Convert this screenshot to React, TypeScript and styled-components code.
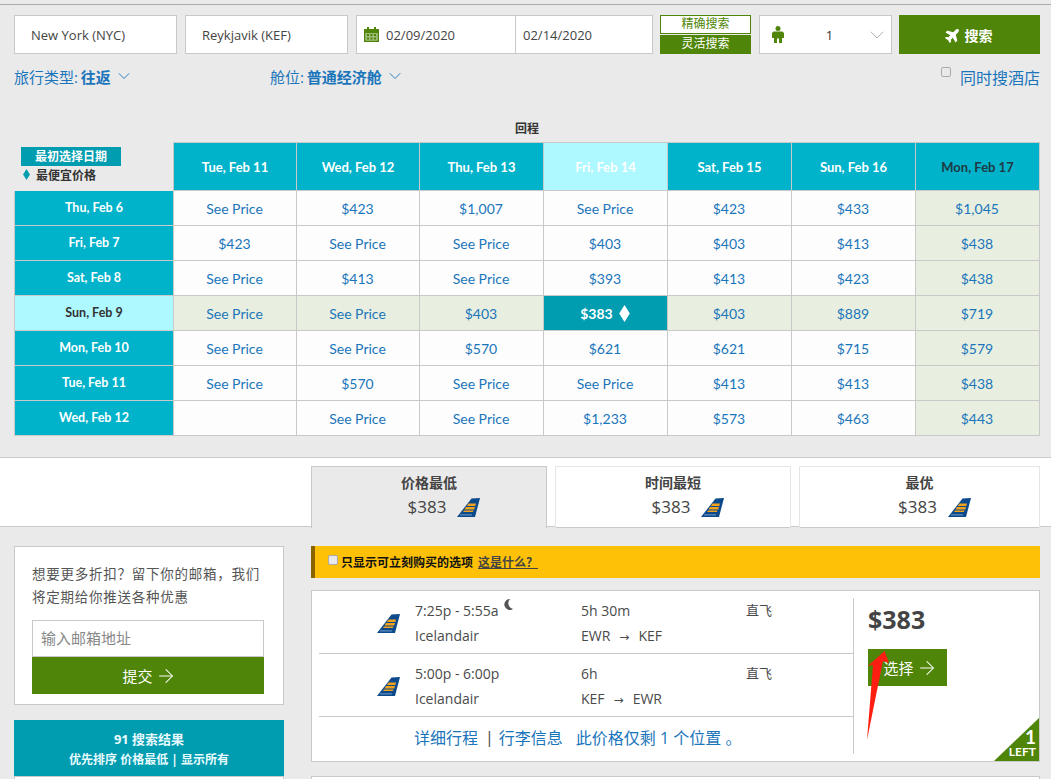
import React, { FunctionComponent } from "react"
import styled, { createGlobalStyle } from "styled-components"
import { ArrowRight, ChevronDown } from "lucide-react"
import { FaPlane } from "react-icons/fa"

const SANS = `"Open Sans", "Noto Sans CJK SC", sans-serif`
const LATO = `Lato, "Noto Sans CJK SC", sans-serif`
const GREEN = "#4f8508"
const BLUE = "#1a75bb"
const LINE = "#c9c9c9"

const GlobalStyle = createGlobalStyle`
  html, body {
    margin: 0;
    height: 100%;
    overflow: hidden;
    background: #eaeaea;
  }
  * {
    box-sizing: border-box;
  }
`

const Page = styled.div`
  height: 779px;
  overflow: hidden;
  padding-top: 4px;
  font-family: ${SANS};
  color: #444;
`

const SearchArea = styled.div`
  border-top: 1px solid #aaa;
  padding: 10px 11px 0 14px;
`

const SearchRow = styled.div`
  display: flex;
  gap: 8px;
  height: 39px;
`

const Field = styled.div<{ width: number }>`
  display: flex;
  align-items: center;
  width: ${({ width }) => width}px;
  background: #fff;
  border: 1px solid ${LINE};
  font-size: 13px;
  color: #444;
`

const PlaceField = styled(Field)`
  padding: 1px 0 0 16px;
`

const DatePart = styled.div<{ first?: boolean }>`
  display: flex;
  align-items: center;
  gap: 7px;
  height: 100%;
  padding-left: 7px;
  width: ${({ first }) => (first ? "159px" : "auto")};
  flex: ${({ first }) => (first ? "0 0 auto" : "1")};
  border-right: ${({ first }) => (first ? `1px solid ${LINE}` : "none")};
`

const ModeStack = styled.div`
  display: flex;
  flex-direction: column;
  gap: 1px;
  width: 91px;
  margin-left: -1px;
`

const ModeButton = styled.div<{ active?: boolean }>`
  flex: 1 1 0;
  min-height: 0;
  display: flex;
  align-items: center;
  justify-content: center;
  padding-bottom: 1px;
  font-size: 12px;
  line-height: 1;
  background: ${({ active }) => (active ? GREEN : "#fff")};
  color: ${({ active }) => (active ? "#fff" : GREEN)};
  border: 1px solid ${GREEN};
`

const PaxField = styled(Field)`
  justify-content: space-between;
  padding: 0 2px 0 12px;
  color: #333;
`

const PaxCount = styled.span`
  margin-left: 10px;
`

const SearchButton = styled.div`
  display: flex;
  align-items: center;
  justify-content: center;
  gap: 4px;
  width: 141px;
  margin-left: -1px;
  padding-right: 2px;
  background: ${GREEN};
  color: #fff;
  font-size: 14px;
  font-weight: 600;
`

const OptionsRow = styled.div`
  display: flex;
  align-items: flex-start;
  height: 30px;
  margin-top: 12px;
  font-size: 15px;
  color: ${BLUE};
`

const OptionLink = styled.div<{ width?: number }>`
  display: flex;
  align-items: center;
  gap: 3px;
  width: ${({ width }) => (width ? `${width}px` : "auto")};
  height: 20px;

  b {
    font-weight: 700;
    margin-left: -1px;
  }
`

const HotelOption = styled.div`
  margin-left: auto;
  display: flex;
  align-items: flex-start;
  gap: 9px;
  font-size: 16px;
  line-height: 24px;
  margin-right: 0;
`

const Check = styled.span`
  display: block;
  flex: none;
  width: 10px;
  height: 10px;
  margin-top: 1px;
  background: #e9e9e9;
  border: 1px solid #aaa;
  border-radius: 2px;
`

const ReturnTitle = styled.div`
  text-align: center;
  font-size: 12px;
  font-weight: 700;
  color: #333;
  height: 17px;
  line-height: 17px;
  margin: 24px 0 5px;
`

const Matrix = styled.div`
  display: grid;
  grid-template-columns: 159px 123px 123px 124px 124px 124px 124px 125px;
  grid-template-rows: 49px repeat(7, 35px);
  width: 1026px;
  font-family: ${LATO};
`

const LegendCell = styled.div`
  padding: 5px 0 0 7px;
`

const LegendChip = styled.div`
  width: 100px;
  height: 19px;
  line-height: 19px;
  background: #009cb0;
  color: #fff;
  text-align: center;
  font-size: 12px;
  font-weight: 700;
`

const LegendNote = styled.div`
  display: flex;
  align-items: center;
  gap: 6px;
  height: 16px;
  padding-left: 2px;
  font-size: 12px;
  font-weight: 700;
  color: #333;
`

const Head = styled.div<{ tone?: "light" | "dark" }>`
  display: flex;
  align-items: center;
  justify-content: center;
  background: ${({ tone }) => (tone === "light" ? "#aef8ff" : "#00b3cb")};
  color: ${({ tone }) => (tone === "dark" ? "#1f3a44" : "#fff")};
  border: 1px solid ${LINE};
  border-right-width: 0;
  font-size: 13px;
  font-weight: 700;

  &:nth-child(8) {
    border-right-width: 1px;
  }
`

const RowLabel = styled.div<{ light?: boolean }>`
  display: flex;
  align-items: center;
  justify-content: center;
  padding-bottom: 2px;
  background: ${({ light }) => (light ? "#aef8ff" : "#00b3cb")};
  color: ${({ light }) => (light ? "#333" : "#fff")};
  border-bottom: 1px solid ${LINE};
  border-left: 1px solid ${LINE};
  font-size: 12.5px;
  font-weight: 700;
`

const Price = styled.div<{ shade?: boolean; best?: boolean }>`
  display: flex;
  align-items: center;
  justify-content: center;
  gap: 6px;
  padding-right: 1px;
  background: ${({ shade, best }) => (best ? "#009cb0" : shade ? "#e8efe0" : "#fdfdfd")};
  color: ${({ best }) => (best ? "#fff" : BLUE)};
  border-bottom: 1px solid ${LINE};
  border-left: 1px solid ${LINE};
  font-size: 14px;
  font-weight: ${({ best }) => (best ? 700 : 400)};

  &:nth-child(8n + 8) {
    border-right: 1px solid ${LINE};
  }
`

const SortBand = styled.div`
  display: flex;
  justify-content: flex-end;
  gap: 8px;
  height: 70px;
  margin-top: 21px;
  padding: 8px 11px 0 0;
  background: #fff;
  border-top: 1px solid ${LINE};
  border-bottom: 1px solid ${LINE};
`

const SortTab = styled.div<{ active?: boolean; width: number }>`
  display: flex;
  flex-direction: column;
  align-items: center;
  width: ${({ width }) => width}px;
  height: 62px;
  padding-top: 7px;
  background: ${({ active }) => (active ? "#eaeaea" : "#fff")};
  border: 1px solid ${({ active }) => (active ? LINE : "#e6e6e6")};
  border-bottom: none;
  margin-bottom: -1px;
  ${({ active }) => (active ? "" : `box-shadow: inset 0 -1px 0 ${LINE};`)}
`

const SortTitle = styled.div`
  font-size: 14px;
  font-weight: 600;
  line-height: 18px;
  color: #444;
`

const SortPrice = styled.div`
  display: flex;
  align-items: center;
  gap: 11px;
  margin-top: 3px;
  padding-left: 30px;
  font-size: 17px;
  line-height: 24px;
  color: #444;
`

const Main = styled.div`
  display: flex;
  gap: 27px;
  padding: 19px 11px 0 14px;
`

const Sidebar = styled.div`
  flex: 0 0 270px;
`

const DealBox = styled.div`
  height: 159px;
  padding: 16px 19px 0 17px;
  background: #fff;
  border: 1px solid ${LINE};
`

const DealText = styled.div`
  font-size: 13.5px;
  line-height: 23px;
  letter-spacing: 0.75px;
  color: #555;
  white-space: nowrap;
`

const EmailInput = styled.div`
  height: 37px;
  line-height: 35px;
  margin-top: 11px;
  padding-left: 8px;
  border: 1px solid ${LINE};
  font-size: 15px;
  color: #888;
`

const SubmitButton = styled.div`
  display: flex;
  align-items: center;
  justify-content: center;
  gap: 2px;
  height: 37px;
  padding-left: 3px;
  background: ${GREEN};
  color: #fff;
  font-size: 15px;
`

const ResultsBox = styled.div`
  height: 56px;
  margin-top: 15px;
  padding-top: 9px;
  background: #009cb0;
  color: #e9fbff;
  text-align: center;
  font-weight: 700;
`

const ResultsCount = styled.div`
  font-size: 13px;
  line-height: 20px;
`

const ResultsSort = styled.div`
  margin-top: 1px;
  font-size: 12px;
  line-height: 20px;
`

const SidebarRest = styled.div`
  height: 30px;
  background: #fff;
  border: 1px solid ${LINE};
`

const Results = styled.div`
  flex: 0 0 729px;
`

const Notice = styled.div`
  display: flex;
  align-items: center;
  height: 32px;
  padding-left: 13px;
  background: #ffc107;
  border-left: 4px solid #8a6400;
  font-size: 12px;
  font-weight: 700;
  color: #111;

  a {
    margin-left: 5px;
    color: #444;
    text-decoration: underline;
  }
`

const NoticeCheck = styled(Check)`
  margin: -4px 3px 0 0;
`

const Card = styled.div`
  position: relative;
  display: flex;
  height: 172px;
  margin-top: 12px;
  padding: 7px 0 7px 7px;
  background: #fff;
  border: 1px solid ${LINE};
`

const Legs = styled.div`
  width: 535px;
  border-right: 1px solid ${LINE};
`

const Leg = styled.div<{ first?: boolean }>`
  display: grid;
  grid-template-columns: 96px 166px 165px 1fr;
  align-items: start;
  height: ${({ first }) => (first ? "56px" : "63px")};
  padding-top: ${({ first }) => (first ? "0" : "7px")};
  border-bottom: 1px solid ${LINE};
  font-size: 14px;
  color: #4a4a4a;
`

const TailSlot = styled.div`
  justify-self: end;
  margin: 16px 15px 0 0;
  line-height: 0;
`

const LegLines = styled.div`
  line-height: 25px;
  white-space: nowrap;
`

const Stops = styled.div`
  line-height: 25px;
  font-size: 13px;
`

const Moon = styled.svg`
  position: relative;
  top: -6px;
  left: 5px;
`

const Arrowed = styled.span`
  margin: 0 9px;
  font-size: 12px;
  font-family: "DejaVu Sans", sans-serif;
`

const LinkRow = styled.div`
  display: flex;
  align-items: center;
  height: 39px;
  padding-left: 95px;
  font-size: 16px;
  color: ${BLUE};
  white-space: nowrap;
`

const Pipe = styled.span`
  margin: 0 5px 0 7px;
  color: #444;
`

const LinkGap = styled.span`
  margin-left: 13px;
`

const Fare = styled.div`
  padding: 5px 0 0 14px;
`

const FareAmount = styled.div`
  font-size: 25px;
  font-weight: 700;
  line-height: 32px;
  color: #444;
`

const SelectButton = styled.div`
  display: flex;
  align-items: center;
  justify-content: center;
  gap: 2px;
  width: 79px;
  height: 37px;
  margin-top: 14px;
  padding-left: 6px;
  background: ${GREEN};
  color: #fff;
  font-size: 15px;
`

const RedArrow = styled.svg`
  position: absolute;
  left: 552px;
  top: 60px;
`

const LeftBadge = styled.div`
  position: absolute;
  right: 0;
  bottom: 0;
  width: 45px;
  height: 43px;
  padding-right: 3px;
  background: ${GREEN};
  clip-path: polygon(100% 0, 100% 100%, 0 100%);
  color: #fff;
  text-align: right;
  font-family: ${LATO};
`

const BadgeCount = styled.div`
  margin-top: 11px;
  font-size: 19px;
  font-weight: 700;
  line-height: 16px;
`

const BadgeText = styled.div`
  margin-top: 1px;
  font-size: 12px;
  font-weight: 700;
  line-height: 12px;
`

const NextCard = styled.div`
  height: 40px;
  margin-top: 14px;
  background: #fff;
  border: 1px solid ${LINE};
`

const CalendarIcon: FunctionComponent = () => (
  <svg width="15" height="15" viewBox="0 0 15 15" fill={GREEN}>
    <rect x="3" y="0" width="2" height="3" />
    <rect x="10" y="0" width="2" height="3" />
    <path d="M0 2h15v13H0zM1.500 6v7.500h12V6z" />
    <path d="M3 7h2v2H3zM6.500 7h2v2h-2zM10 7h2v2h-2zM3 10.500h2v2H3zM6.500 10.500h2v2h-2zM10 10.500h2v2h-2z" />
    <path d="M1.500 6h12v7.500h-12z" opacity="0.55" />
  </svg>
)

const PersonIcon: FunctionComponent = () => (
  <svg width="12" height="17" viewBox="0 0 12 17" fill={GREEN}>
    <circle cx="6" cy="2.500" r="2.500" />
    <path d="M1.500 5.500h9l1.500 1.500v5H10v5H7V12.500H5V17H2v-5H0V7z" />
  </svg>
)

// icelandair tail fin
const TailLogo: FunctionComponent = () => (
  <svg width="23" height="19" viewBox="0 0 23 19">
    <path d="M14.500 0.500L23 0L18 19H0Z" fill="#0d4a8c" />
    <path d="M11.500 5.500h7.500l-.7 2.600h-8.500zM9 9.100h9l-.7 2.400H7.500zM7 12.400h9.500l-.6 1.600H6z" fill="#f2a31b" />
    <path d="M3 16.500h12v.8H3z" fill="#8fb3d9" />
  </svg>
)

const Diamond: FunctionComponent<{ color: string; width: number; height: number }> = ({
  color,
  width,
  height,
}) => (
  <svg width={width} height={height} viewBox="0 0 10 16">
    <path d="M5 0L10 8L5 16L0 8Z" fill={color} />
  </svg>
)

const headers = ["Tue, Feb 11", "Wed, Feb 12", "Thu, Feb 13", "Fri, Feb 14", "Sat, Feb 15", "Sun, Feb 16", "Mon, Feb 17"]

const S = "See Price"
const rows: { label: string; prices: string[] }[] = [
  { label: "Thu, Feb 6", prices: [S, "$423", "$1,007", S, "$423", "$433", "$1,045"] },
  { label: "Fri, Feb 7", prices: ["$423", S, S, "$403", "$403", "$413", "$438"] },
  { label: "Sat, Feb 8", prices: [S, "$413", S, "$393", "$413", "$423", "$438"] },
  { label: "Sun, Feb 9", prices: [S, S, "$403", "$383", "$403", "$889", "$719"] },
  { label: "Mon, Feb 10", prices: [S, S, "$570", "$621", "$621", "$715", "$579"] },
  { label: "Tue, Feb 11", prices: [S, "$570", S, S, "$413", "$413", "$438"] },
  { label: "Wed, Feb 12", prices: ["", S, S, "$1,233", "$573", "$463", "$443"] },
]

const App: FunctionComponent = () => {
  return (
    <Page>
      <GlobalStyle />
      <SearchArea>
        <SearchRow>
          <PlaceField width={163}>New York (NYC)</PlaceField>
          <PlaceField width={163}>Reykjavik (KEF)</PlaceField>
          <Field width={297}>
            <DatePart first>
              <CalendarIcon />
              02/09/2020
            </DatePart>
            <DatePart>02/14/2020</DatePart>
          </Field>
          <ModeStack>
            <ModeButton>精确搜索</ModeButton>
            <ModeButton active>灵活搜索</ModeButton>
          </ModeStack>
          <PaxField width={133}>
            <PersonIcon />
            <PaxCount>1</PaxCount>
            <ChevronDown size={24} strokeWidth={0.9} color="#aaa" />
          </PaxField>
          <SearchButton>
            <FaPlane size={16} style={{ transform: "rotate(-45deg)" }} />
            搜索
          </SearchButton>
        </SearchRow>
        <OptionsRow>
          <OptionLink width={256}>
            <span>
              旅行类型: <b>往返</b>
            </span>
            <ChevronDown size={20} strokeWidth={1.1} />
          </OptionLink>
          <OptionLink>
            <span>
              舱位: <b>普通经济舱</b>
            </span>
            <ChevronDown size={20} strokeWidth={1.1} />
          </OptionLink>
          <HotelOption>
            <Check />
            同时搜酒店
          </HotelOption>
        </OptionsRow>
        <ReturnTitle>回程</ReturnTitle>
        <Matrix>
          <LegendCell>
            <LegendChip>最初选择日期</LegendChip>
            <LegendNote>
              <Diamond color="#009cb0" width={7} height={11} />
              最便宜价格
            </LegendNote>
          </LegendCell>
          {headers.map((h, i) => (
            <Head key={h} tone={i === 3 ? "light" : i === 6 ? "dark" : undefined}>
              {h}
            </Head>
          ))}
          {rows.map((row, r) => (
            <React.Fragment key={row.label}>
              <RowLabel light={r === 3}>{row.label}</RowLabel>
              {row.prices.map((p, c) => {
                const best = r === 3 && c === 3
                return (
                  <Price key={c} best={best} shade={r === 3 || c === 6}>
                    {p}
                    {best && <Diamond color="#fff" width={11} height={17} />}
                  </Price>
                )
              })}
            </React.Fragment>
          ))}
        </Matrix>
      </SearchArea>

      <SortBand>
        <SortTab active width={236}>
          <SortTitle>价格最低</SortTitle>
          <SortPrice>
            $383
            <TailLogo />
          </SortPrice>
        </SortTab>
        <SortTab width={236}>
          <SortTitle>时间最短</SortTitle>
          <SortPrice>
            $383
            <TailLogo />
          </SortPrice>
        </SortTab>
        <SortTab width={241}>
          <SortTitle>最优</SortTitle>
          <SortPrice>
            $383
            <TailLogo />
          </SortPrice>
        </SortTab>
      </SortBand>

      <Main>
        <Sidebar>
          <DealBox>
            <DealText>
              想要更多折扣？留下你的邮箱，我们
              <br />
              将定期给你推送各种优惠
            </DealText>
            <EmailInput>输入邮箱地址</EmailInput>
            <SubmitButton>
              提交
              <ArrowRight size={22} strokeWidth={1.1} />
            </SubmitButton>
          </DealBox>
          <ResultsBox>
            <ResultsCount>91 搜索结果</ResultsCount>
            <ResultsSort>优先排序 价格最低 | 显示所有</ResultsSort>
          </ResultsBox>
          <SidebarRest />
        </Sidebar>

        <Results>
          <Notice>
            <NoticeCheck />
            只显示可立刻购买的选项
            <a>这是什么？</a>
          </Notice>
          <Card>
            <Legs>
              <Leg first>
                <TailSlot>
                  <TailLogo />
                </TailSlot>
                <LegLines>
                  7:25p - 5:55a
                  <Moon width="9" height="11" viewBox="0 0 9 11">
                    <path d="M6 0A5.500 5.500 0 1 0 9 10A6 6 0 0 1 6 0Z" fill="#555" />
                  </Moon>
                  <br />
                  Icelandair
                </LegLines>
                <LegLines>
                  5h 30m
                  <br />
                  EWR<Arrowed>→</Arrowed>KEF
                </LegLines>
                <Stops>直飞</Stops>
              </Leg>
              <Leg>
                <TailSlot>
                  <TailLogo />
                </TailSlot>
                <LegLines>
                  5:00p - 6:00p
                  <br />
                  Icelandair
                </LegLines>
                <LegLines>
                  6h
                  <br />
                  KEF<Arrowed>→</Arrowed>EWR
                </LegLines>
                <Stops>直飞</Stops>
              </Leg>
              <LinkRow>
                详细行程
                <Pipe>|</Pipe>
                行李信息
                <LinkGap>此价格仅剩 1 个位置 。</LinkGap>
              </LinkRow>
            </Legs>
            <Fare>
              <FareAmount>$383</FareAmount>
              <SelectButton>
                选择
                <ArrowRight size={22} strokeWidth={1.1} />
              </SelectButton>
            </Fare>
            <RedArrow width="26" height="92" viewBox="0 0 26 92">
              <path d="M20.500 0L25 12L19 10L3 89L9 14L4 15Z" fill="#ff1e12" />
            </RedArrow>
            <LeftBadge>
              <BadgeCount>1</BadgeCount>
              <BadgeText>LEFT</BadgeText>
            </LeftBadge>
          </Card>
          <NextCard />
        </Results>
      </Main>
    </Page>
  )
}

export default App
